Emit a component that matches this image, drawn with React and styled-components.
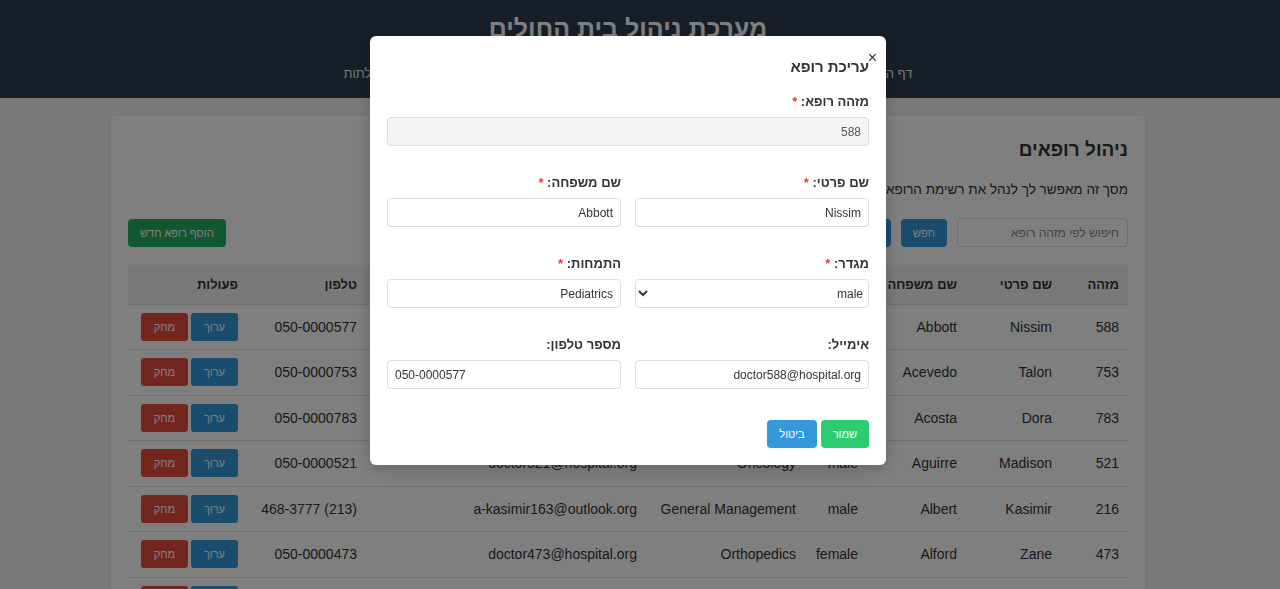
import styled, { createGlobalStyle } from 'styled-components';

const GlobalStyle = createGlobalStyle`
  html, body {
    margin: 0;
    padding: 0;
  }
  body {
    background: #f4f4f4;
    font-family: "Liberation Sans", Arial, "DejaVu Sans", sans-serif;
    color: #333;
    direction: rtl;
    overflow: hidden;
  }
  * {
    box-sizing: border-box;
  }
`;

const navLinks = ['דף הבית', 'רופאים', 'מטופלים', 'תורים', 'מחלקות', 'קבלתות'];

const doctors = [
  { id: 588, first: 'Nissim', last: 'Abbott', gender: 'male', spec: 'Pediatrics', email: 'doctor588@hospital.org', phone: '050-0000577' },
  { id: 753, first: 'Talon', last: 'Acevedo', gender: 'male', spec: 'Cardiology', email: 'doctor753@hospital.org', phone: '050-0000753' },
  { id: 783, first: 'Dora', last: 'Acosta', gender: 'female', spec: 'Neurology', email: 'doctor783@hospital.org', phone: '050-0000783' },
  { id: 521, first: 'Madison', last: 'Aguirre', gender: 'male', spec: 'Oncology', email: 'doctor521@hospital.org', phone: '050-0000521' },
  { id: 216, first: 'Kasimir', last: 'Albert', gender: 'male', spec: 'General Management', email: 'a-kasimir163@outlook.org', phone: '(213) 468-3777' },
  { id: 473, first: 'Zane', last: 'Alford', gender: 'female', spec: 'Orthopedics', email: 'doctor473@hospital.org', phone: '050-0000473' },
  { id: 390, first: 'Lara', last: 'Allen', gender: 'female', spec: 'Dermatology', email: 'doctor390@hospital.org', phone: '050-0000390' },
  { id: 612, first: 'Omar', last: 'Alvarez', gender: 'male', spec: 'Radiology', email: 'doctor612@hospital.org', phone: '050-0000612' },
];

const columns = [
  { label: 'מזהה', width: 67 },
  { label: 'שם פרטי', width: 95 },
  { label: 'שם משפחה', width: 99 },
  { label: 'מגדר', width: 62 },
  { label: 'התמחות', width: 159 },
  { label: 'אימייל', width: 280 },
  { label: 'טלפון', width: 119 },
  { label: 'פעולות', width: 119 },
];

const App = () => {
  return (
    <>
      <GlobalStyle />
      <Header>
        <SiteTitle>מערכת ניהול בית החולים</SiteTitle>
        <Nav>
          {navLinks.map((l) => (
            <NavLink key={l} href='#'>
              {l}
            </NavLink>
          ))}
        </Nav>
      </Header>

      <Main>
        <Card>
          <PageTitle>ניהול רופאים</PageTitle>
          <Intro>
            מסך זה מאפשר לך לנהל את רשימת הרופאים בבית החולים: להוסיף, לערוך,
            לחפש ולמחוק רופאים.
          </Intro>
          <Toolbar>
            <SearchGroup>
              <SearchInput placeholder='חיפוש לפי מזהה רופא' />
              <Button $color='#3498db'>חפש</Button>
              <Button $color='#3498db'>הצג הכל</Button>
            </SearchGroup>
            <Button $color='#27ae60'>הוסף רופא חדש</Button>
          </Toolbar>

          <Table>
            <colgroup>
              {columns.map((c) => (
                <col key={c.label} style={{ width: c.width }} />
              ))}
            </colgroup>
            <thead>
              <tr>
                {columns.map((c) => (
                  <Th key={c.label}>{c.label}</Th>
                ))}
              </tr>
            </thead>
            <tbody>
              {doctors.map((d) => (
                <tr key={d.id}>
                  <Td>{d.id}</Td>
                  <Td>{d.first}</Td>
                  <Td>{d.last}</Td>
                  <Td>{d.gender}</Td>
                  <Td>{d.spec}</Td>
                  <Td>{d.email}</Td>
                  <Td>{d.phone}</Td>
                  <Td>
                    <Actions>
                      <SmallButton $color='#3498db'>ערוך</SmallButton>
                      <SmallButton $color='#e74c3c'>מחק</SmallButton>
                    </Actions>
                  </Td>
                </tr>
              ))}
            </tbody>
          </Table>
        </Card>
      </Main>

      <Overlay>
        <Modal>
          <CloseButton>×</CloseButton>
          <ModalTitle>עריכת רופא</ModalTitle>

          <Field>
            <Label>
              מזהה רופא: <Req>*</Req>
            </Label>
            <Input value='588' disabled readOnly />
          </Field>

          <FormGrid>
            <Field>
              <Label>
                שם פרטי: <Req>*</Req>
              </Label>
              <Input value='Nissim' readOnly />
            </Field>
            <Field>
              <Label>
                שם משפחה: <Req>*</Req>
              </Label>
              <Input value='Abbott' readOnly />
            </Field>
            <Field>
              <Label>
                מגדר: <Req>*</Req>
              </Label>
              <Select value='male' onChange={() => {}}>
                <option value='male'>male</option>
                <option value='female'>female</option>
              </Select>
            </Field>
            <Field>
              <Label>
                התמחות: <Req>*</Req>
              </Label>
              <Input value='Pediatrics' readOnly />
            </Field>
            <Field>
              <Label>אימייל:</Label>
              <Input value='doctor588@hospital.org' readOnly />
            </Field>
            <Field>
              <Label>מספר טלפון:</Label>
              <Input $ltr value='050-0000577' readOnly />
            </Field>
          </FormGrid>

          <ModalActions>
            <Button $color='#2ecc71'>שמור</Button>
            <Button $color='#3498db'>ביטול</Button>
          </ModalActions>
        </Modal>
      </Overlay>
    </>
  );
};

export default App;

const Header = styled.header`
  background: #2c3e50;
  color: #fff;
  text-align: center;
  padding: 11px 24px 15px 0;
`;

const SiteTitle = styled.h1`
  margin: 0 0 20px;
  font-size: 25px;
  line-height: 34px;
  font-weight: 700;
`;

const Nav = styled.nav`
  width: 569px;
  margin: 0 auto;
  display: flex;
  justify-content: space-between;
`;

const NavLink = styled.a`
  color: #ecf0f1;
  text-decoration: none;
  font-size: 13px;
  line-height: 18px;
`;

const Main = styled.main`
  padding: 18px 24px 0 0;
`;

const Card = styled.section`
  width: 1034px;
  margin: 0 auto;
  background: #fff;
  border-radius: 5px;
  padding: 20px 17px 20px;
  box-shadow: 0 2px 6px rgba(0, 0, 0, 0.1);
`;

const PageTitle = styled.h2`
  margin: 0;
  font-size: 19px;
  line-height: 28px;
  font-weight: 700;
  color: #333;
`;

const Intro = styled.p`
  margin: 17px 0 19px;
  font-size: 13.5px;
  line-height: 18px;
`;

const Toolbar = styled.div`
  display: flex;
  justify-content: space-between;
  align-items: center;
  margin-bottom: 18px;
`;

const SearchGroup = styled.div`
  display: flex;
  align-items: center;
  gap: 10px;
`;

const SearchInput = styled.input`
  width: 171px;
  height: 29px;
  padding: 0 8px;
  border: 1px solid #ddd;
  border-radius: 4px;
  font-family: inherit;
  font-size: 12px;
  color: #333;
  &::placeholder {
    color: #888;
  }
`;

const Button = styled.button`
  height: 28px;
  padding: 0 12px;
  border: none;
  border-radius: 4px;
  background: ${(p) => p.$color};
  color: #fff;
  font-family: inherit;
  font-size: 11px;
  cursor: pointer;
`;

const Table = styled.table`
  width: 1000px;
  table-layout: fixed;
  border-collapse: collapse;
  font-size: 14px;
`;

const Th = styled.th`
  background: #f2f2f2;
  text-align: right;
  font-size: 13px;
  font-weight: 700;
  height: 39px;
  padding: 0 9px;
  border-bottom: 1px solid #ddd;
`;

const Td = styled.td`
  text-align: right;
  height: 45.5px;
  padding: 0 9px;
  border-bottom: 1px solid #ddd;
  white-space: nowrap;
`;

const Actions = styled.div`
  display: flex;
  gap: 3px;
`;

const SmallButton = styled.button`
  width: 47px;
  height: 28px;
  border: none;
  border-radius: 3px;
  background: ${(p) => p.$color};
  color: #fff;
  font-family: inherit;
  font-size: 11px;
`;

const Overlay = styled.div`
  position: fixed;
  inset: 0;
  background: rgba(0, 0, 0, 0.5);
  display: flex;
  justify-content: center;
  align-items: flex-start;
  padding: 36px 24px 0 0;
`;

const Modal = styled.div`
  position: relative;
  width: 516px;
  background: #fff;
  border-radius: 6px;
  padding: 21px 17px 17px;
  box-shadow: 0 4px 16px rgba(0, 0, 0, 0.2);
`;

const CloseButton = styled.span`
  position: absolute;
  top: 14px;
  right: 9px;
  font-size: 16px;
  line-height: 16px;
  color: #333;
  cursor: pointer;
`;

const ModalTitle = styled.h3`
  margin: 0 0 17px;
  font-size: 15px;
  line-height: 20px;
  font-weight: 700;
`;

const FormGrid = styled.div`
  display: grid;
  grid-template-columns: 1fr 1fr;
  column-gap: 14px;
`;

const Field = styled.div`
  margin-bottom: 29px;
`;

const Label = styled.label`
  display: block;
  margin-bottom: 7px;
  font-size: 13px;
  line-height: 16px;
  font-weight: 700;
  color: #333;
`;

const Req = styled.span`
  color: #e53935;
`;

const Input = styled.input`
  display: block;
  width: 100%;
  height: 29px;
  padding: 0 7px;
  border: 1px solid #ddd;
  border-radius: 4px;
  background: #fff;
  font-family: inherit;
  font-size: 12px;
  color: #333;
  direction: ${(p) => (p.$ltr ? 'ltr' : 'rtl')};
  text-align: ${(p) => (p.$ltr ? 'left' : 'right')};
  &:disabled {
    background: #f5f5f5;
    color: #555;
  }
`;

const Select = styled.select`
  display: block;
  width: 100%;
  height: 29px;
  padding: 0 1px 0 5px;
  border: 1px solid #ddd;
  border-radius: 4px;
  background: #fff;
  font-family: inherit;
  font-size: 12px;
  color: #333;
`;

const ModalActions = styled.div`
  display: flex;
  gap: 4px;
  margin-top: 2px;
`;
